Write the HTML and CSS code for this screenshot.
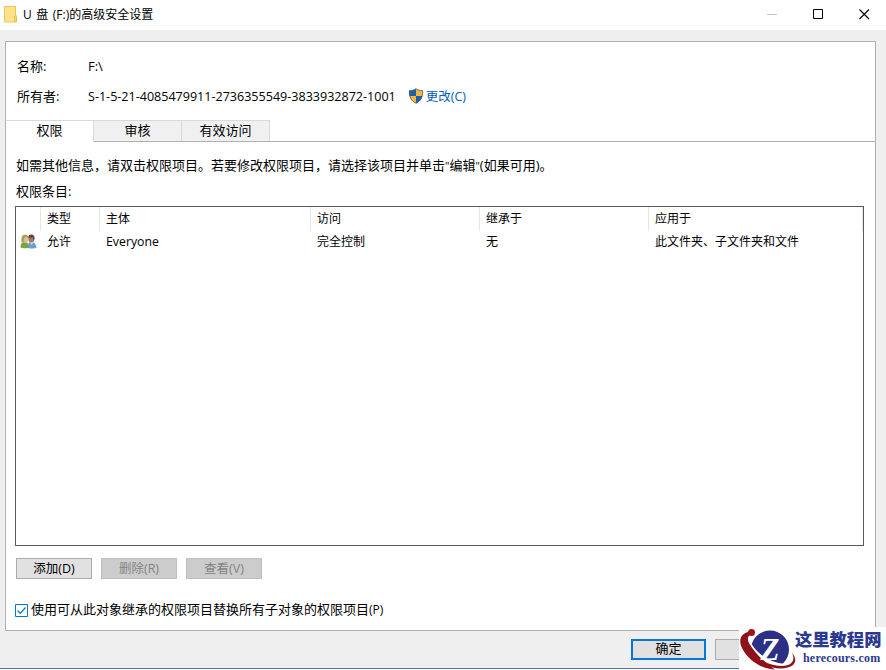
FILE: index.html
```html
<!DOCTYPE html>
<html lang="zh-CN">
<head>
  <meta charset="UTF-8">
  <title>U 盘 (F:)的高级安全设置</title>
  <link rel="stylesheet" href="styles.css">
</head>
<body>
  <div class="window">
    <div class="titlebar">
      <svg class="folder" width="14" height="17" viewBox="0 0 14 17">
        <path d="M.5 .5h11v10l1 1v4.500h-12z" fill="#fde28a" stroke="#e9c65c"/>
        <path d="M10.500 15.500v-5l2-1v6z" fill="#f7d568" stroke="#e0b94c" stroke-width=".7"/>
      </svg>
      <span class="title">U 盘 (F:)的高级安全设置</span>
      <div class="controls">
        <svg width="11" height="11"><path d="M0 5.500h10" stroke="#c4c4c4"/></svg>
        <svg width="11" height="11"><path d="M.5 .5h9v9h-9z" fill="none" stroke="#000"/></svg>
        <svg width="11" height="11"><path d="M.5 .5l9.500 9.500M10 .5l-9.500 9.500" stroke="#000" stroke-width="1.100"/></svg>
      </div>
    </div>

    <div class="panel">
      <div class="info">
        <span class="label">名称:</span>
        <span>F:\</span>
      </div>
      <div class="info">
        <span class="label">所有者:</span>
        <span class="sid">S-1-5-21-4085479911-2736355549-3833932872-1001</span>
        <a class="change">
          <svg width="16" height="16" viewBox="0 0 16 16">
            <clipPath id="shield"><path d="M8 .5C10 2 12 2.500 15 2.500C15 9 13.500 13 8 15.500C2.500 13 1 9 1 2.500C4 2.500 6 2 8 .5z"/></clipPath>
            <g clip-path="url(#shield)">
              <path d="M0 0h8v8H0zM8 8h8v8H8z" fill="#1d5fa8"/>
              <path d="M8 0h8v8H8zM0 8h8v8H0z" fill="#f6b73c"/>
            </g>
            <path d="M8 .8C10 2.200 12 2.700 14.700 2.700C14.700 9 13.200 12.700 8 15.200C2.800 12.700 1.300 9 1.300 2.700C4 2.700 6 2.200 8 .8z" fill="none" stroke="#45617e" stroke-width=".8"/>
          </svg>
          <span>更改(C)</span>
        </a>
      </div>

      <div class="tabs">
        <div class="tab active">权限</div>
        <div class="tab">审核</div>
        <div class="tab">有效访问</div>
      </div>

      <p class="hint">如需其他信息，请双击权限项目。若要修改权限项目，请选择该项目并单击<span class="quote">"</span>编辑<span class="quote">"</span>(如果可用)。</p>
      <p class="caption">权限条目:</p>

      <div class="list">
        <div class="row head">
          <span></span>
          <span>类型</span>
          <span>主体</span>
          <span>访问</span>
          <span>继承于</span>
          <span>应用于</span>
        </div>
        <div class="row">
          <span class="users">
            <svg width="17" height="15" viewBox="0 0 17 15">
              <path d="M8 14c-.3-4 .7-6 3.500-6s4.800 2 5 5.500c-2 1.200-6 1.300-8.500.5z" fill="#6d9fd2"/>
              <path d="M10.500 8l1 3 2-3z" fill="#dce9f5"/>
              <ellipse cx="11.300" cy="4.800" rx="3" ry="3.800" fill="#a77958"/>
              <path d="M8.200 4C8 1.500 9.500 .5 11.500 .5s3.500 1.500 3 4.500l-1.200 1.500-.5-3z" fill="#574a48"/>
              <path d="M.5 13.500c0-4 1.500-5.500 4-5.500s4.500 1.500 4.500 5.500c-2 1-6.500 1-8.500 0z" fill="#7ba449"/>
              <ellipse cx="5" cy="4.800" rx="3.200" ry="4" fill="#dfc18e"/>
              <path d="M1.500 8.500C1.200 4 1.700 .7 5 .7c2 0 3 .8 3.200 2.300L4.500 3.500 3.500 8z" fill="#a7a061"/>
            </svg>
          </span>
          <span>允许</span>
          <span class="latin">Everyone</span>
          <span>完全控制</span>
          <span>无</span>
          <span>此文件夹、子文件夹和文件</span>
        </div>
      </div>

      <div class="actions">
        <button>添加(D)</button>
        <button disabled>删除(R)</button>
        <button disabled>查看(V)</button>
      </div>

      <label class="replace">
        <svg width="13" height="13"><path d="M.5 .5h12v12H.5z" fill="#fff" stroke="#0078d7"/><path d="M2.500 6.500l2.700 2.800L10.500 3.500" fill="none" stroke="#0078d7" stroke-width="1.200"/></svg>
        <span>使用可从此对象继承的权限项目替换所有子对象的权限项目<small>(P)</small></span>
      </label>
    </div>

    <div class="footer">
      <button class="primary">确定</button>
      <button></button>
    </div>
  </div>

  <div class="watermark">
    <svg width="60" height="43" viewBox="0 0 60 43">
      <circle cx="31" cy="22.500" r="19" fill="#2b2f85"/>
      <path d="M13 4C2 6-1 14 4 23C10 34 24 43 40 43C50 43 57 40 57 34C57 32 56 29 53 26C55 32 55 36 50 37.500C39 39 26 33 18 25C11 18 8 11 13 8z" fill="#fff" stroke="#fff" stroke-width="1.500"/>
      <path d="M11 4.500C2 6-1 13 3 21C9 33 22 42 36 42.500C28 37 19 29 14 22C9 16 7 11 11 8z" fill="#8e1218"/>
      <path d="M22 36C34 43 48 43 54 38C58 34 56 29 53 26C56 32 54 36 49 38C42 40 32 39 22 33z" fill="#8e1218"/>
      <circle cx="12.500" cy="5.500" r="3.500" fill="#9c1418"/>
      <text x="31" y="33" text-anchor="middle" class="zed">Z</text>
    </svg>
    <div class="brand">
      <div class="brand-name">这里教程网</div>
      <div class="brand-url">herecours.com</div>
    </div>
  </div>
</body>
</html>
```
FILE: styles.css
```css
* {
  box-sizing: border-box;
}

body {
  margin: 0;
  background-color: #fff;
  color: #000;
  font-family: "Open Sans", "Noto Sans CJK SC", sans-serif;
  font-size: 12px;
  overflow: hidden;
}

svg {
  display: block;
  flex: none;
}

.window {
  height: 669px;
  background-color: #efefef;
  border-bottom: 1px solid #3c7fb8;
}

.titlebar {
  display: flex;
  align-items: center;
  height: 30px;
  padding: 0 16px 2px 4px;
  background-color: #fff;
}

.title {
  margin-left: 5px;
  line-height: 20px;
  padding-top: 1px;
  word-spacing: 1.4px;
}

.controls {
  display: flex;
  gap: 35px;
  margin-left: auto;
}

.panel {
  width: 871px;
  height: 590px;
  margin: 11px 0 0 5px;
  padding-top: 9px;
  background-color: #fff;
  border: 1px solid #b0b0b0;
  font-size: 13px;
}

.info {
  display: flex;
  align-items: center;
  height: 30px;
  padding-left: 11px;
}

.label {
  width: 71px;
  padding-bottom: 2px;
}

.sid {
  font-size: 12.55px;
}

.change {
  display: flex;
  align-items: center;
  gap: 2px;
  margin-left: 12px;
  color: #0060b8;
  font-size: 12.5px;
}

.change span {
  padding-bottom: 2px;
}

.tabs {
  display: flex;
  height: 31px;
  padding-top: 9px;
  border-bottom: 1px solid #b0b0b0;
}

.tab {
  width: 88px;
  height: 21px;
  line-height: 18px;
  text-align: center;
  background-color: #f0f0f0;
  border: 1px solid #d9d9d9;
  border-left: none;
  border-bottom: none;
}

.tab.active {
  height: 22px;
  background-color: #fff;
}

.hint,
.caption {
  margin: 0 0 0 10px;
  line-height: 26px;
  white-space: nowrap;
}

.hint {
  padding-top: 10px;
}

.caption {
  line-height: 25px;
}

.quote {
  font-size: 11px;
}

.list {
  width: 849px;
  height: 340px;
  margin: 2px 0 0 9px;
  border: 1px solid #5a5a5a;
  font-size: 12px;
}

.row {
  display: grid;
  grid-template-columns: 25px 59px 211px 169px 169px 214px;
  height: 22px;
  line-height: 21px;
}

.row span {
  padding-left: 6px;
}

.row .users {
  padding: 3px 0 0 4px;
}

.row .latin {
  font-size: 12.3px;
}

.head {
  height: 24px;
  line-height: 23px;
}

.head span {
  border-right: 1px solid #e5e5e5;
}

.actions {
  display: flex;
  gap: 9px;
  margin: 12px 0 0 10px;
}

button {
  width: 76px;
  height: 21px;
  padding: 0;
  background-color: #e1e1e1;
  border: 1px solid #adadad;
  color: #000;
  font-family: inherit;
  font-size: 12.5px;
  line-height: 18px;
}

button:disabled {
  background-color: #ccc;
  border-color: #bfbfbf;
  color: #838383;
}

.replace {
  display: flex;
  align-items: center;
  gap: 3px;
  height: 20px;
  margin: 21px 0 0 9px;
}

.replace span {
  padding-bottom: 4px;
}

.replace small {
  font-size: 12px;
}

.footer {
  display: flex;
  gap: 9px;
  padding: 8px 0 0 631px;
}

.primary {
  width: 75px;
  padding-bottom: 2px;
  border: 2px solid #0078d7;
  font-size: 13px;
  line-height: 15px;
}

/* site logo over the bottom right corner */
.watermark {
  position: absolute;
  right: 0;
  bottom: 0;
  display: flex;
  width: 147px;
  height: 43px;
  background-color: #fff;
  color: #2b3990;
}

.zed {
  fill: #fff;
  font: italic bold 31px "Liberation Serif", serif;
}

.brand {
  margin-left: -4px;
  white-space: nowrap;
}

.brand-name {
  height: 24px;
  font-family: "Noto Sans CJK SC", sans-serif;
  font-size: 17.3px;
  font-weight: 900;
  line-height: 24px;
}

.brand-url {
  padding-left: 8px;
  font-family: "Liberation Serif", serif;
  font-size: 12px;
  font-weight: bold;
  letter-spacing: 0.2px;
  line-height: 14px;
}
```
